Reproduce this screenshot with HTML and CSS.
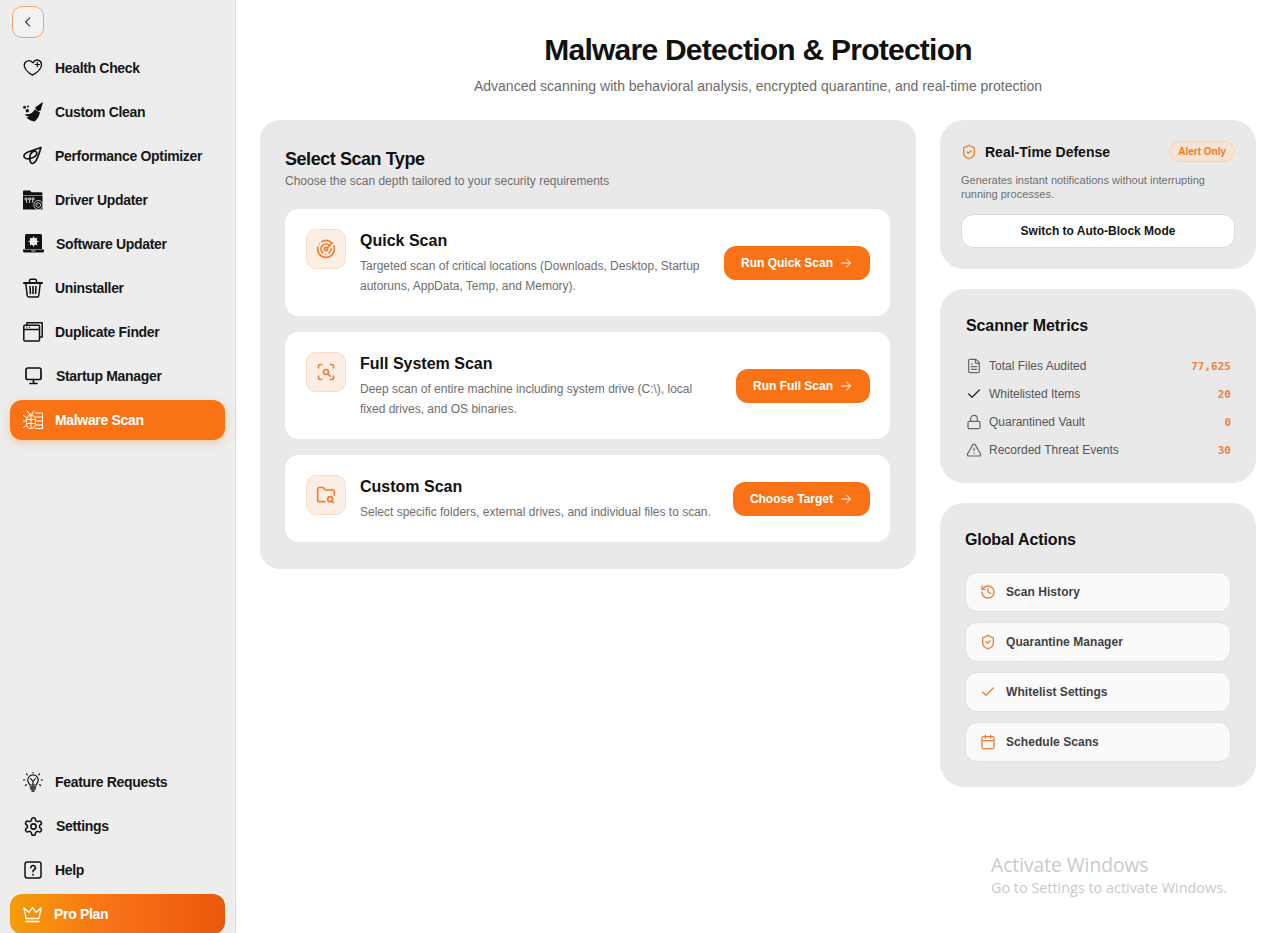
FILE: index.html
```html
<!DOCTYPE html>
<html lang="en">
<head>
  <meta charset="UTF-8">
  <meta name="viewport" content="width=device-width, initial-scale=1.0">
  <title>Malware Detection &amp; Protection</title>
  <link rel="stylesheet" href="styles.css">
</head>
<body>
  <div class="app">
    <!-- sidebar -->
    <aside class="sidebar">
      <button class="back-btn">
        <svg width="14" height="14" viewBox="0 0 24 24" fill="none" stroke="#444" stroke-width="2.2" stroke-linecap="round" stroke-linejoin="round"><path d="M15 5l-7 7 7 7"/></svg>
      </button>

      <nav class="nav">
        <a class="nav-item nav-item-hover">
          <svg width="20" height="20" viewBox="0 0 20 20" fill="none" stroke="#111" stroke-width="1.300" stroke-linecap="round" stroke-linejoin="round"><path d="M10 4.800C8.300 3.100 6.200 2.300 4.400 3 2 3.900.9 6.300 1.500 8.800c.5 2.200 2.400 4.500 5 6.500 1.200.9 2.200 1.500 3 1.700.8-.2 1.800-.8 3-1.700 2.600-2 5-4.300 5.700-7 .7-2.600-.3-4.900-2.400-5.900-2-.9-4.100-.2-5.800 2.400z"/><path d="M14.300 4.300v4.400M12.100 6.500h4.400" stroke-width="1.200"/></svg>
          <span>Health Check</span>
        </a>
        <a class="nav-item">
          <svg width="20" height="20" viewBox="0 0 20 20" fill="#111"><path d="M19.300.2l.6.500-2.400 8.300-1.100-.5-.5.9-3.500-2.100.5-.9-1-.6z"/><path d="M11.700 7.400l5.300 3c-.6 3.500-2.700 6.700-5.500 9.100-2.800-.3-6-1.800-8-3.900l2.800-1-3-.6c-.5-.5-1-1.200-1.300-1.900 3.600.8 7.500-.8 9.700-4.700z"/><circle cx="1.600" cy="5.300" r="1.500"/><circle cx="5" cy="4.500" r="1"/><circle cx="4.300" cy="8.800" r="1.700"/></svg>
          <span>Custom Clean</span>
        </a>
        <a class="nav-item">
          <svg width="20" height="20" viewBox="0 0 20 20" fill="none" stroke="#111" stroke-width="1.700" stroke-linecap="round" stroke-linejoin="round"><path d="M18 1.500L5 6C1.800 7.200.5 9.300 1.200 11c.8 1.800 3.300 2.200 6 1.500 3.300-.8 6.300-2.800 6.600-5 .2-2-2-2.900-4-1.800C7.600 7 6.500 10.500 6.800 13.500c.2 2.600 1.300 4.200 3 4 1.200-.2 2.200-1.200 3.200-2.700 1.500-2.500 3.500-8.500 5-13.300z"/></svg>
          <span>Performance Optimizer</span>
        </a>
        <a class="nav-item">
          <svg width="20" height="20" viewBox="0 0 20 20"><path d="M0 2C0 1.200.5.600 1.300.6H7L8.500 2.300H18c.8 0 1.500.6 1.500 1.400V5H0z" fill="#111"/><path d="M0 5.500h19.500v14H0z" fill="#111"/><path d="M2 8h2v1.800H2zM5.500 8h2v1.800h-2zM9 8h2v1.800H9zM3 9.800l1 3.200M6.500 9.800v3.200M10 9.800L9.200 13" stroke="#eee" stroke-width=".8" fill="none"/><circle cx="15.300" cy="15" r="4.500" fill="#111" stroke="#eee" stroke-width=".8"/><path d="M13 15a2.300 2.300 0 1 0 .8-1.700M13.200 12.800v1.500h1.500" fill="none" stroke="#eee" stroke-width=".8"/></svg>
          <span>Driver Updater</span>
        </a>
        <a class="nav-item">
          <svg width="21" height="20" viewBox="0 0 21 20"><path d="M2 1.500A1.500 1.500 0 0 1 3.500 0h14A1.500 1.500 0 0 1 19 1.500V15H2z" fill="#111"/><path d="M0 15.500h21V17a1.500 1.500 0 0 1-1.500 1.500h-18A1.500 1.500 0 0 1 0 17z" fill="#111"/><circle cx="10.500" cy="7.500" r="3.800" fill="#eee"/><path d="M10.500 3v9M6 7.500h9M7.300 4.300l6.400 6.400M13.700 4.300l-6.400 6.400" stroke="#eee" stroke-width="1.200" stroke-linecap="round"/><path d="M8.500 17h4" stroke="#eee" stroke-width=".8"/></svg>
          <span>Software Updater</span>
        </a>
        <a class="nav-item">
          <svg width="20" height="20" viewBox="0 0 20 20" fill="none" stroke="#111" stroke-linecap="round" stroke-linejoin="round"><path d="M1 5h18" stroke-width="2"/><path d="M6.500 4.500V2.800c0-.9.7-1.600 1.600-1.600h3.800c.9 0 1.600.7 1.600 1.600v1.700" stroke-width="1.500"/><path d="M2.800 5.500l1.400 12c.1 1 .8 1.500 1.600 1.500h8.400c.8 0 1.500-.5 1.600-1.500l1.400-12" stroke-width="1.500"/><path d="M7 8.500l.4 7M10 8.500v7M13 8.500l-.4 7" stroke-width="1.600"/></svg>
          <span>Uninstaller</span>
        </a>
        <a class="nav-item">
          <svg width="20" height="20" viewBox="0 0 20 20" fill="none" stroke="#111" stroke-width="1.500" stroke-linejoin="round"><path d="M4 3V.8h15.200V15H16.500"/><rect x=".8" y="3.200" width="15.700" height="15.800" rx="1"/><path d="M.8 7.500h15.700"/><path d="M3.500 5.400h.8M6 5.400h.8" stroke-width="1.300"/></svg>
          <span>Duplicate Finder</span>
        </a>
        <a class="nav-item">
          <svg width="21" height="20" viewBox="0 0 21 20" fill="none" stroke="#111" stroke-width="1.700" stroke-linecap="round" stroke-linejoin="round"><rect x="3" y="2" width="15" height="11.500" rx="1.800"/><path d="M7 17.500h7M10.500 13.500v4"/></svg>
          <span>Startup Manager</span>
        </a>
        <a class="nav-item nav-item-active">
          <svg width="20" height="20" viewBox="0 0 20 20" fill="none" stroke="#fff" stroke-width="1" stroke-linecap="round" stroke-linejoin="round"><path d="M4 1l2.500 3M11 1L9 4"/><path d="M5.500 5.500a2.400 2.400 0 0 1 4.500 0"/><rect x="3.500" y="5.500" width="9" height="13" rx="4.200"/><path d="M8 5.500v13M3.700 9.500h8.600M3.500 13.500h9"/><path d="M0 5l3.500 2.500M0 11h3.500M.5 17.500l3.500-2.500"/><path d="M12.500 3h7v15.500h-7M12.500 7h7M12.500 11h7M12.500 15h7"/></svg>
          <span>Malware Scan</span>
        </a>
      </nav>

      <nav class="nav nav-bottom">
        <a class="nav-item">
          <svg width="20" height="20" viewBox="0 0 20 20" fill="none" stroke="#111" stroke-width="1.200" stroke-linecap="round" stroke-linejoin="round"><path d="M6.800 13c-.3-1.300-2-2.300-2-5a5.200 5.200 0 0 1 10.400 0c0 2.700-1.700 3.700-2 5z"/><path d="M7.600 6.500L10 9.500l2.400-3M10 9.500V13"/><path d="M7.200 15h5.600M7.800 17h4.400" stroke-width="1.500"/><path d="M9 19h2" stroke-width="1.500"/><path d="M10 0v.8M3.500 2l.8.800M16.500 2l-.8.800M.5 8h1.300M18.200 8h1.300M2.300 13.500l1-.8M17.700 13.500l-1-.8"/></svg>
          <span>Feature Requests</span>
        </a>
        <a class="nav-item">
          <svg width="21" height="21" viewBox="0 0 24 24" fill="none" stroke="#111" stroke-width="1.800" stroke-linecap="round" stroke-linejoin="round"><path d="M12.220 2h-.44a2 2 0 0 0-2 2v.18a2 2 0 0 1-1 1.730l-.43.250a2 2 0 0 1-2 0l-.15-.08a2 2 0 0 0-2.730.730l-.22.380a2 2 0 0 0 .73 2.730l.15.100a2 2 0 0 1 1 1.720v.510a2 2 0 0 1-1 1.740l-.15.090a2 2 0 0 0-.73 2.730l.22.380a2 2 0 0 0 2.730.730l.15-.08a2 2 0 0 1 2 0l.43.250a2 2 0 0 1 1 1.730V20a2 2 0 0 0 2 2h.44a2 2 0 0 0 2-2v-.18a2 2 0 0 1 1-1.730l.43-.250a2 2 0 0 1 2 0l.15.080a2 2 0 0 0 2.730-.730l.22-.390a2 2 0 0 0-.73-2.730l-.15-.080a2 2 0 0 1-1-1.740v-.500a2 2 0 0 1 1-1.740l.15-.090a2 2 0 0 0 .73-2.730l-.22-.380a2 2 0 0 0-2.730-.730l-.15.080a2 2 0 0 1-2 0l-.43-.250a2 2 0 0 1-1-1.730V4a2 2 0 0 0-2-2z"/><circle cx="12" cy="12" r="3"/></svg>
          <span>Settings</span>
        </a>
        <a class="nav-item">
          <svg width="20" height="20" viewBox="0 0 20 20" fill="none" stroke="#111" stroke-width="1.500" stroke-linecap="round" stroke-linejoin="round"><rect x="2" y="2" width="16" height="16" rx="2.200"/><path d="M7.800 7.800a2.300 2.300 0 1 1 3.400 2c-.9.500-1.200 1-1.200 1.900" stroke-width="1.600"/><path d="M10 14.600v.1" stroke-width="1.800"/></svg>
          <span>Help</span>
        </a>
        <a class="nav-item nav-item-pro">
          <svg width="19" height="20" viewBox="0 0 19 20" fill="none" stroke="#fff" stroke-width="1.300" stroke-linecap="round" stroke-linejoin="round"><path d="M9.500 3.500l3.500 5L18 4l-2 10.500H3L1 4l5 4.500z"/><path d="M3 17.500h13"/></svg>
          <span>Pro Plan</span>
        </a>
      </nav>
    </aside>

    <!-- main content -->
    <main class="main">
      <header class="page-header">
        <h1>Malware Detection &amp; Protection</h1>
        <p>Advanced scanning with behavioral analysis, encrypted quarantine, and real-time protection</p>
      </header>

      <div class="columns">
        <section class="panel scan-panel">
          <h2>Select Scan Type</h2>
          <p class="panel-sub">Choose the scan depth tailored to your security requirements</p>

          <div class="scan-list">
            <article class="scan-card">
              <div class="scan-icon">
                <svg width="20" height="20" viewBox="0 0 24 24" fill="none" stroke="#f07f35" stroke-width="2" stroke-linecap="round" stroke-linejoin="round"><path d="M19.070 4.930A10 10 0 0 0 6.990 3.340"/><path d="M4 6h.01"/><path d="M2.290 9.620A10 10 0 1 0 21.310 8.350"/><path d="M16.240 7.760A6 6 0 1 0 8.230 16.670"/><path d="M12 18h.01"/><path d="M17.990 11.660A6 6 0 0 1 15.770 16.670"/><circle cx="12" cy="12" r="2"/><path d="M13.410 10.590l5.660-5.660"/></svg>
              </div>
              <div class="scan-text">
                <h3>Quick Scan</h3>
                <p>Targeted scan of critical locations (Downloads, Desktop, Startup autoruns, AppData, Temp, and Memory).</p>
              </div>
              <button class="run-btn">Run Quick Scan
                <svg width="12" height="12" viewBox="0 0 24 24" fill="none" stroke="#fff" stroke-width="2" stroke-linecap="round" stroke-linejoin="round"><path d="M3 12h18M13 4l8 8-8 8"/></svg>
              </button>
            </article>

            <article class="scan-card">
              <div class="scan-icon">
                <svg width="20" height="20" viewBox="0 0 24 24" fill="none" stroke="#f07f35" stroke-width="2" stroke-linecap="round" stroke-linejoin="round"><path d="M3 7V5a2 2 0 0 1 2-2h2"/><path d="M17 3h2a2 2 0 0 1 2 2v2"/><path d="M21 17v2a2 2 0 0 1-2 2h-2"/><path d="M7 21H5a2 2 0 0 1-2-2v-2"/><circle cx="12" cy="12" r="3"/><path d="M17 17l-2.900-2.900"/></svg>
              </div>
              <div class="scan-text">
                <h3>Full System Scan</h3>
                <p>Deep scan of entire machine including system drive (C:\), local fixed drives, and OS binaries.</p>
              </div>
              <button class="run-btn">Run Full Scan
                <svg width="12" height="12" viewBox="0 0 24 24" fill="none" stroke="#fff" stroke-width="2" stroke-linecap="round" stroke-linejoin="round"><path d="M3 12h18M13 4l8 8-8 8"/></svg>
              </button>
            </article>

            <article class="scan-card">
              <div class="scan-icon">
                <svg width="20" height="20" viewBox="0 0 24 24" fill="none" stroke="#f07f35" stroke-width="2" stroke-linecap="round" stroke-linejoin="round"><path d="M10.700 20H4a2 2 0 0 1-2-2V5a2 2 0 0 1 2-2h3.900a2 2 0 0 1 1.690.9l.810 1.200a2 2 0 0 0 1.670.9H20a2 2 0 0 1 2 2v4.100"/><circle cx="17" cy="17" r="3"/><path d="M21 21l-1.900-1.900"/></svg>
              </div>
              <div class="scan-text">
                <h3>Custom Scan</h3>
                <p>Select specific folders, external drives, and individual files to scan.</p>
              </div>
              <button class="run-btn">Choose Target
                <svg width="12" height="12" viewBox="0 0 24 24" fill="none" stroke="#fff" stroke-width="2" stroke-linecap="round" stroke-linejoin="round"><path d="M3 12h18M13 4l8 8-8 8"/></svg>
              </button>
            </article>
          </div>
        </section>

        <div class="side-col">
          <section class="panel defense-panel">
            <div class="defense-head">
              <svg width="16" height="16" viewBox="0 0 24 24" fill="none" stroke="#f07f35" stroke-width="2" stroke-linecap="round" stroke-linejoin="round"><path d="M20 13c0 5-3.500 7.500-7.660 8.950a1 1 0 0 1-.67-.010C7.500 20.500 4 18 4 13V6a1 1 0 0 1 1-1c2 0 4.500-1.200 6.240-2.720a1.170 1.170 0 0 1 1.520 0C14.510 3.810 17 5 19 5a1 1 0 0 1 1 1z"/><path d="M9 12l2 2 4-4"/></svg>
              <h4>Real-Time Defense</h4>
              <span class="badge">Alert Only</span>
            </div>
            <p class="defense-desc">Generates instant notifications without interrupting running processes.</p>
            <button class="switch-btn">Switch to Auto-Block Mode</button>
          </section>

          <section class="panel metrics-panel">
            <h3 class="side-title">Scanner Metrics</h3>
            <ul class="metrics">
              <li>
                <svg width="16" height="16" viewBox="0 0 24 24" fill="none" stroke="#666" stroke-width="1.800" stroke-linecap="round" stroke-linejoin="round"><path d="M15 2H6a2 2 0 0 0-2 2v16a2 2 0 0 0 2 2h12a2 2 0 0 0 2-2V7z"/><path d="M14 2v4a2 2 0 0 0 2 2h4"/><path d="M10 9H8M16 13H8M16 17H8"/></svg>
                <span class="metric-label">Total Files Audited</span><span class="metric-value">77,625</span>
              </li>
              <li>
                <svg width="16" height="16" viewBox="0 0 24 24" fill="none" stroke="#333" stroke-width="2.200" stroke-linecap="round" stroke-linejoin="round"><path d="M20 6L9 17l-5-5"/></svg>
                <span class="metric-label">Whitelisted Items</span><span class="metric-value">20</span>
              </li>
              <li>
                <svg width="16" height="16" viewBox="0 0 24 24" fill="none" stroke="#666" stroke-width="1.800" stroke-linecap="round" stroke-linejoin="round"><rect x="3" y="11" width="18" height="11" rx="2"/><path d="M7 11V7a5 5 0 0 1 10 0v4"/></svg>
                <span class="metric-label">Quarantined Vault</span><span class="metric-value">0</span>
              </li>
              <li>
                <svg width="16" height="16" viewBox="0 0 24 24" fill="none" stroke="#666" stroke-width="1.800" stroke-linecap="round" stroke-linejoin="round"><path d="M21.730 18l-8-14a2 2 0 0 0-3.480 0l-8 14A2 2 0 0 0 4 21h16a2 2 0 0 0 1.730-3"/><path d="M12 9v4M12 17h.01"/></svg>
                <span class="metric-label">Recorded Threat Events</span><span class="metric-value">30</span>
              </li>
            </ul>
          </section>

          <section class="panel actions-panel">
            <h3 class="side-title">Global Actions</h3>
            <div class="actions">
              <button class="action-btn">
                <svg width="16" height="16" viewBox="0 0 24 24" fill="none" stroke="#f07f35" stroke-width="2" stroke-linecap="round" stroke-linejoin="round"><path d="M3 12a9 9 0 1 0 9-9 9.750 9.750 0 0 0-6.740 2.740L3 8"/><path d="M3 3v5h5"/><path d="M12 7v5l4 2"/></svg>
                <span>Scan History</span>
              </button>
              <button class="action-btn">
                <svg width="16" height="16" viewBox="0 0 24 24" fill="none" stroke="#f07f35" stroke-width="2" stroke-linecap="round" stroke-linejoin="round"><path d="M20 13c0 5-3.500 7.500-7.660 8.950a1 1 0 0 1-.67-.010C7.500 20.500 4 18 4 13V6a1 1 0 0 1 1-1c2 0 4.500-1.200 6.240-2.720a1.170 1.170 0 0 1 1.520 0C14.510 3.810 17 5 19 5a1 1 0 0 1 1 1z"/><path d="M9 12l2 2 4-4"/></svg>
                <span>Quarantine Manager</span>
              </button>
              <button class="action-btn">
                <svg width="16" height="16" viewBox="0 0 24 24" fill="none" stroke="#f07f35" stroke-width="2" stroke-linecap="round" stroke-linejoin="round"><path d="M20 6L9 17l-5-5"/></svg>
                <span>Whitelist Settings</span>
              </button>
              <button class="action-btn">
                <svg width="16" height="16" viewBox="0 0 24 24" fill="none" stroke="#f07f35" stroke-width="2" stroke-linecap="round" stroke-linejoin="round"><path d="M8 2v4M16 2v4"/><rect x="3" y="4" width="18" height="18" rx="2"/><path d="M3 10h18"/></svg>
                <span>Schedule Scans</span>
              </button>
            </div>
          </section>
        </div>
      </div>
    </main>
  </div>

  <div class="watermark">
    <div class="watermark-title">Activate Windows</div>
    <div class="watermark-sub">Go to Settings to activate Windows.</div>
  </div>
</body>
</html>
```

FILE: styles.css
```css
* {
  box-sizing: border-box;
}

html, body {
  height: 100%;
}

body {
  margin: 0;
  background-color: white;
  font-family: "Liberation Sans", Arial, sans-serif;
  color: #111;
  overflow: hidden;
}

h1, h2, h3, h4, p, ul {
  margin: 0;
  padding: 0;
}

button {
  font-family: inherit;
  cursor: pointer;
}

.app {
  display: flex;
  align-items: flex-start;
}

/* sidebar */
.sidebar {
  width: 236px;
  height: 934px;
  flex-shrink: 0;
  display: flex;
  flex-direction: column;
  padding: 6px 10px 0;
  background-color: #ededed;
  border-right: 1px solid #dcdcdc;
}

.back-btn {
  width: 32px;
  height: 32px;
  margin: 0 0 10px 2px;
  padding: 0;
  display: flex;
  align-items: center;
  justify-content: center;
  background-color: #f2f2f2;
  border: 1px solid #f5a06a;
  border-radius: 10px;
}

.nav {
  display: flex;
  flex-direction: column;
  gap: 4px;
}

.nav-bottom {
  margin-top: auto;
}

.nav-item {
  height: 40px;
  display: flex;
  align-items: center;
  gap: 12px;
  padding-left: 13px;
  border-radius: 12px;
  font-size: 14px;
  font-weight: bold;
  letter-spacing: -0.33px;
  color: #161616;
}

.nav-item svg {
  flex-shrink: 0;
}

.nav-item-hover {
  background-color: #ececec;
}

.nav-item-active {
  background-color: #f97316;
  color: white;
  box-shadow: 0 3px 8px rgba(249, 115, 22, 0.3);
}

.nav-item-pro {
  background: linear-gradient(90deg, #f59e0b 0%, #f97316 45%, #ea580c 100%);
  color: white;
}

/* main */
.main {
  flex: 1;
  min-width: 0;
  padding: 32px 18px 0 24px;
}

.page-header {
  text-align: center;
  margin-bottom: 25px;
}

.page-header h1 {
  font-size: 30px;
  line-height: 36px;
  font-weight: bold;
  letter-spacing: -0.75px;
  color: #111;
}

.page-header p {
  margin-top: 9px;
  font-size: 14px;
  line-height: 18px;
  color: #6b6b6b;
}

.columns {
  display: flex;
  align-items: flex-start;
  gap: 24px;
}

.panel {
  background-color: #e9e9e9;
}

.scan-panel {
  width: 656px;
  padding: 28px 26px 27px 25px;
  border-radius: 20px;
}

.scan-panel h2 {
  font-size: 18px;
  line-height: 22px;
  font-weight: bold;
  letter-spacing: -0.45px;
  color: #111;
}

.panel-sub {
  margin-top: 2px;
  font-size: 12px;
  line-height: 18px;
  color: #6e6e6e;
}

.scan-list {
  margin-top: 19px;
  display: flex;
  flex-direction: column;
  gap: 16px;
}

.scan-card {
  display: flex;
  align-items: center;
  gap: 14px;
  padding: 20px 20px 20px 21px;
  background-color: white;
  border-radius: 14px;
}

.scan-icon {
  width: 40px;
  height: 40px;
  flex-shrink: 0;
  align-self: flex-start;
  display: flex;
  align-items: center;
  justify-content: center;
  background-color: #fdeee3;
  border: 1px solid #f9dcc6;
  border-radius: 10px;
}

.scan-text {
  flex: 1;
  min-width: 0;
  padding-right: 6px;
}

.scan-text h3 {
  font-size: 16px;
  line-height: 23px;
  font-weight: bold;
  color: #111;
}

.scan-text p {
  margin-top: 4px;
  font-size: 12px;
  line-height: 20px;
  color: #6e6e6e;
}

.run-btn {
  height: 34px;
  flex-shrink: 0;
  display: flex;
  align-items: center;
  gap: 7px;
  padding: 0 18px 0 17px;
  background-color: #f97316;
  border: none;
  border-radius: 12px;
  font-size: 12px;
  font-weight: bold;
  color: white;
}

.side-col {
  width: 316px;
  display: flex;
  flex-direction: column;
  gap: 20px;
}

.side-col .panel {
  border-radius: 24px;
}

.defense-panel {
  padding: 21px;
}

.defense-head {
  display: flex;
  align-items: center;
}

.defense-head h4 {
  margin-left: 8px;
  font-size: 14px;
  font-weight: bold;
  color: #111;
}

.badge {
  margin-left: auto;
  height: 21px;
  padding: 0 8px;
  display: flex;
  align-items: center;
  background-color: #f7e3d4;
  border: 1px solid #f6d3b8;
  border-radius: 11px;
  font-size: 10px;
  font-weight: bold;
  color: #f07a2a;
}

.defense-desc {
  margin-top: 11px;
  font-size: 11px;
  line-height: 14px;
  color: #6e6e6e;
}

.switch-btn {
  width: 100%;
  height: 34px;
  margin-top: 13px;
  background-color: white;
  border: 1px solid #d9d9d9;
  border-radius: 12px;
  font-size: 12px;
  font-weight: bold;
  color: #161616;
}

.metrics-panel {
  padding: 27px 25px 19px 26px;
}

.side-title {
  font-size: 16px;
  line-height: 20px;
  font-weight: bold;
  letter-spacing: -0.1px;
  color: #111;
}

.metrics {
  list-style: none;
  margin-top: 16px;
}

.metrics li {
  height: 28px;
  display: flex;
  align-items: center;
  gap: 7px;
}

.metric-label {
  flex: 1;
  font-size: 12px;
  color: #555;
}

.metric-value {
  font-family: "DejaVu Sans Mono", "Liberation Mono", monospace;
  font-size: 11px;
  font-weight: bold;
  color: #f0803a;
}

.actions-panel {
  padding: 27px 25px 25px;
}

.actions {
  margin-top: 22px;
  display: flex;
  flex-direction: column;
  gap: 10px;
}

.action-btn {
  height: 40px;
  display: flex;
  align-items: center;
  gap: 10px;
  padding: 0 14px;
  background-color: #fafafa;
  border: 1px solid #e0e0e0;
  border-radius: 12px;
  font-size: 12px;
  font-weight: bold;
  letter-spacing: 0.05px;
  color: #3f3f46;
}

/* windows activation overlay */
.watermark {
  position: absolute;
  left: 991px;
  top: 852px;
  font-family: "Open Sans", sans-serif;
  color: #c9c9c9;
}

.watermark-title {
  font-size: 19.200px;
  line-height: 26px;
}

.watermark-sub {
  font-size: 14.400px;
  line-height: 20px;
}
```
